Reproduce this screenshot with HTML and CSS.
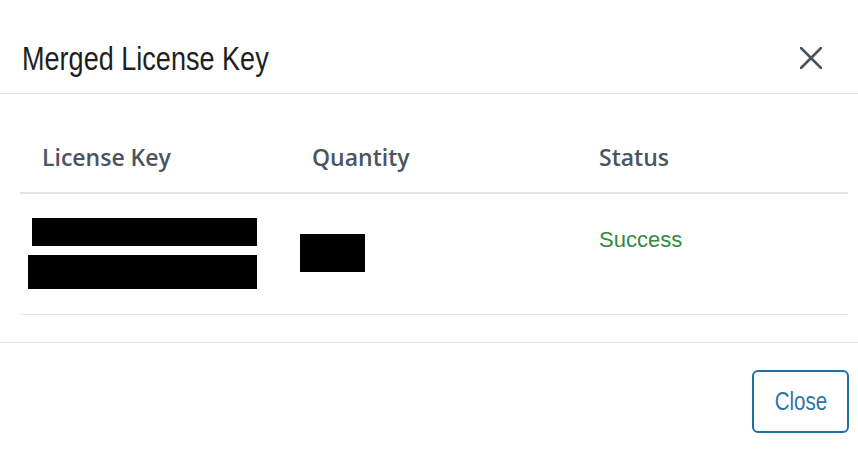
FILE: index.html
```html
<!DOCTYPE html>
<html>
<head>
<meta charset="utf-8">
<link rel="stylesheet" href="styles.css">
</head>
<body>
<div class="modal">
  <div class="modal-header">
    <h3 class="modal-title"><span class="narrow">Merged License Key</span></h3>
    <button class="close-x" aria-label="Close">
      <svg width="22" height="22" viewBox="0 0 22 22"><path d="M1 1 L21 21 M21 1 L1 21" stroke="#4a525d" stroke-width="2.6" stroke-linecap="round" fill="none"/></svg>
    </button>
  </div>
  <div class="modal-body">
    <table class="grid">
      <colgroup><col class="c1"><col class="c2"><col class="c3"></colgroup>
      <thead>
        <tr><th>License Key</th><th>Quantity</th><th>Status</th></tr>
      </thead>
      <tbody>
        <tr>
          <td class="key-cell">
            <div class="redact r1"></div>
            <div class="redact r2"></div>
          </td>
          <td class="qty-cell"><div class="redact r3"></div></td>
          <td class="status-cell"><span class="success">Success</span></td>
        </tr>
      </tbody>
    </table>
  </div>
  <div class="modal-footer">
    <button class="btn-outline"><span class="narrow">Close</span></button>
  </div>
</div>
</body>
</html>
```
FILE: styles.css
```css
html, body {
  margin: 0;
  padding: 0;
  background: #ffffff;
}
.modal {
  width: 858px;
  height: 456px;
  background: #fff;
  font-family: "Liberation Sans", Arial, sans-serif;
}
.narrow {
  display: inline-block;
  transform: scaleX(0.82);
}
.modal-header {
  display: flex;
  justify-content: space-between;
  align-items: flex-start;
  padding: 39px 36px 14px 22px;
  border-bottom: 1px solid #e3e6ea;
}
.modal-title {
  margin: 0;
  font-weight: normal;
  font-size: 33px;
  line-height: 40px;
  color: #1f1f1f;
}
.modal-title .narrow { transform-origin: left center; }
.close-x {
  margin-top: 8px;
  padding: 0;
  border: 0;
  background: none;
  width: 22px;
  height: 22px;
  display: block;
}
.close-x svg { display: block; }
.modal-body {
  padding: 20px 10px 27px 20px;
}
.grid {
  width: 828px;
  border-collapse: collapse;
  table-layout: fixed;
}
.c1 { width: 270px; }
.c2 { width: 287px; }
.c3 { width: 271px; }
.grid th {
  text-align: left;
  font-family: "Open Sans", sans-serif;
  font-weight: 600;
  font-size: 23px;
  line-height: 24px;
  color: #4b5562;
  padding: 31px 0 23px 22px;
  border-bottom: 2px solid #e2e5e9;
}
.grid td {
  vertical-align: top;
  height: 121px;
  box-sizing: border-box;
  border-bottom: 1px solid #e6e8eb;
  padding: 0;
}
.key-cell { padding: 24px 0 0 8px !important; }
.qty-cell { padding: 40px 0 0 10px !important; }
.status-cell { padding: 33px 0 0 22px !important; }
.redact { background: #000; }
.r1 { width: 225px; height: 28px; margin-left: 4px; }
.r2 { width: 229px; height: 34px; margin-top: 9px; }
.r3 { width: 65px; height: 38px; }
.success {
  font-size: 22px;
  line-height: 26px;
  color: #318a3e;
  display: block;
}
.modal-footer {
  border-top: 1px solid #dde1e6;
  display: flex;
  justify-content: flex-end;
  padding: 27px 9px 0 0;
}
.btn-outline {
  width: 97px;
  height: 63px;
  box-sizing: border-box;
  border: 2px solid #1e6fa5;
  border-radius: 6px;
  background: #fff;
  color: #2f74a8;
  font-family: "Liberation Sans", Arial, sans-serif;
  font-size: 25px;
  padding: 0;
}
```
